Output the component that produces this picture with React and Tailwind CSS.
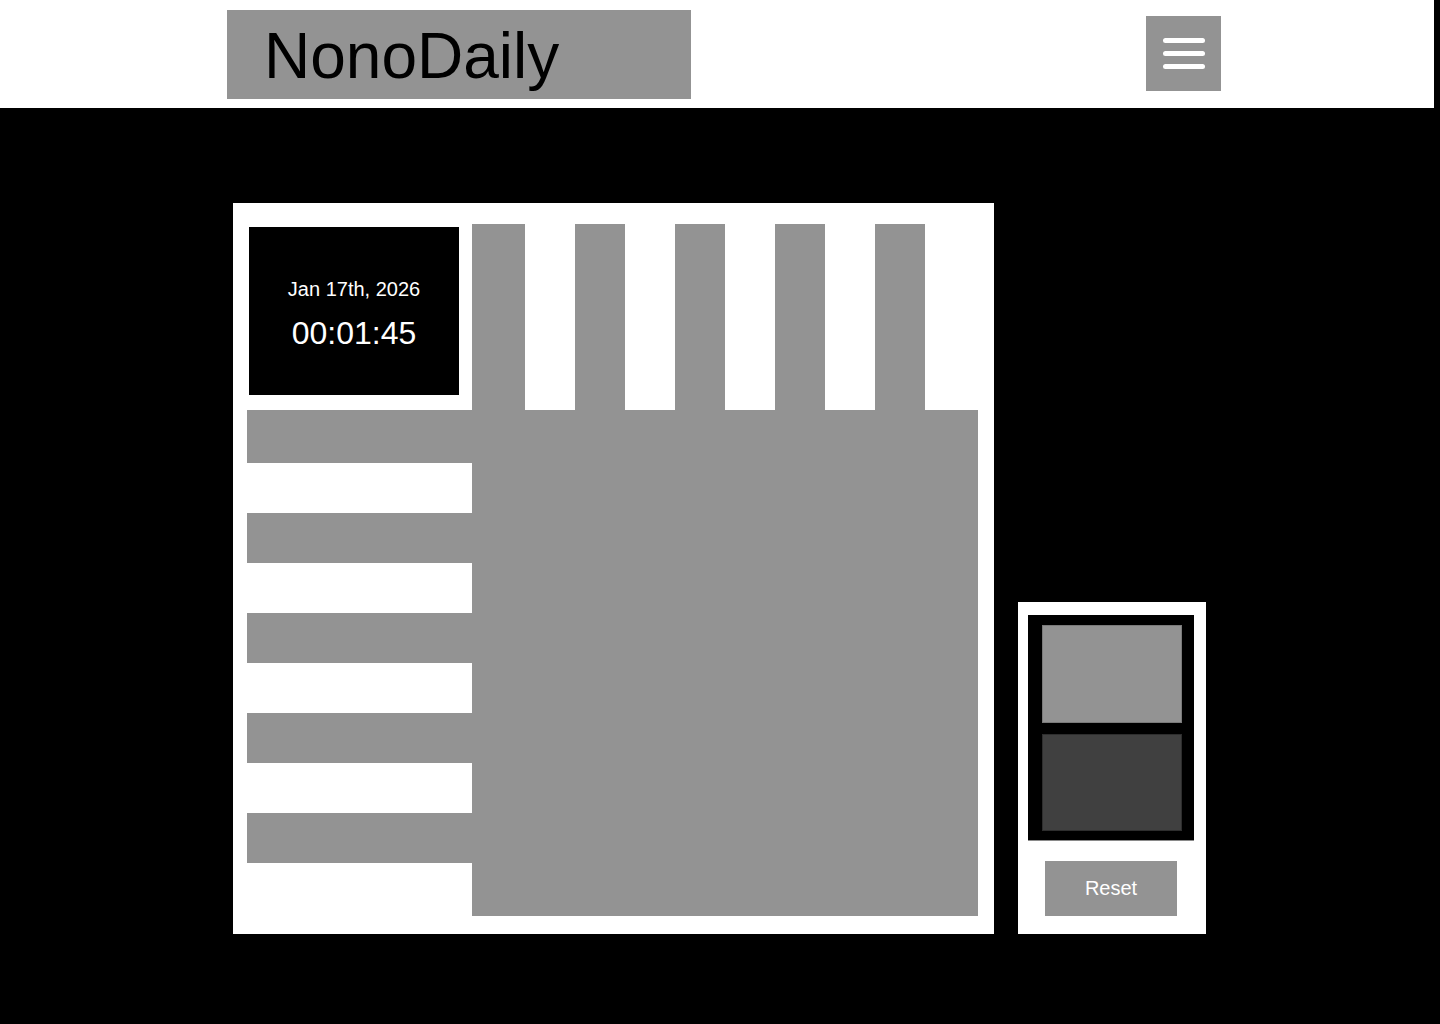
import React from "react";

const colWidths = [53, 50, 50, 50, 50, 50, 50, 50, 50, 53];

export default function App() {
  return (
    <div className="min-h-screen w-full bg-black font-['Liberation_Sans',Arial,sans-serif]">
      <header className="flex h-[108px] w-[1434px] items-center justify-between bg-white pl-[227px] pr-[213px]">
        <div className="flex h-[89px] w-[464px] items-center bg-[#939393] pl-[37px] pt-[4px]">
          <span className="text-[64px] leading-none text-black">NonoDaily</span>
        </div>
        <button className="mb-[1px] flex h-[75px] w-[75px] flex-col items-center justify-center gap-[8px] bg-[#939393]">
          <span className="block h-[5px] w-[42px] rounded-full bg-white" />
          <span className="block h-[5px] w-[42px] rounded-full bg-white" />
          <span className="block h-[5px] w-[42px] rounded-full bg-white" />
        </button>
      </header>

      <main className="mt-[95px] flex items-end gap-[24px] pl-[233px]">
        <div className="h-[731px] w-[761px] bg-white pl-[14px] pt-[21px]">
          <div className="grid grid-cols-[225px_506px] grid-rows-[186px_506px]">
            <div>
              <div className="ml-[2px] mt-[3px] flex h-[168px] w-[210px] flex-col items-center bg-black pt-[51px] text-white">
                <div className="text-[20px] leading-[23px]">Jan 17th, 2026</div>
                <div className="mt-[14px] text-[32px] leading-[37px]">00:01:45</div>
              </div>
            </div>
            <div className="flex h-[186px]">
              {colWidths.map((w, i) => (
                <div
                  key={i}
                  className={i % 2 === 0 ? "h-full bg-[#939393]" : "h-full bg-white"}
                  style={{ width: w }}
                />
              ))}
            </div>
            <div className="flex w-[225px] flex-col">
              {colWidths.map((h, i) => (
                <div
                  key={i}
                  className={i % 2 === 0 ? "w-full bg-[#939393]" : "w-full bg-white"}
                  style={{ height: h }}
                />
              ))}
            </div>
            <div className="h-[506px] w-[506px] bg-[#939393]" />
          </div>
        </div>

        <div className="flex h-[332px] w-[188px] flex-col bg-white pl-[10px] pt-[13px]">
          <div className="flex h-[226px] w-[166px] flex-col border-b border-[#8a8a8a] bg-black pl-[14px] pr-[12px] pt-[10px]">
            <div className="h-[98px] w-[140px] border border-[#7a7a7a] bg-[#939393]" />
            <div className="mt-[11px] h-[97px] w-[140px] border border-[#2e2e2e] bg-[#404040]" />
          </div>
          <button className="ml-[17px] mt-[20px] flex h-[55px] w-[132px] items-center justify-center bg-[#939393] pb-[1px] text-[20px] text-white">
            Reset
          </button>
        </div>
      </main>
    </div>
  );
}
